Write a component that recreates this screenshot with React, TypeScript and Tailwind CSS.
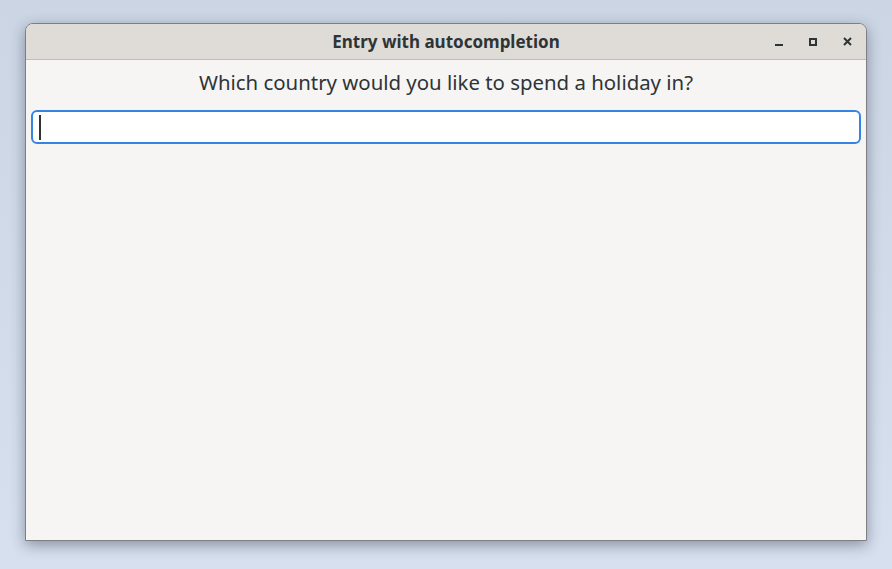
export default function App() {
  return (
    <div className="w-[892px] h-[569px] bg-gradient-to-b from-[#cbd5e3] to-[#d6e0ee] pt-[23px] pl-[25px]" style={{ fontFamily: '"Noto Sans", "Open Sans", sans-serif' }}>
      <div className="w-[842px] h-[518px] flex flex-col bg-[#f6f5f4] rounded-t-[8px] border border-[#7d7f84] shadow-[0_4px_14px_rgba(40,50,70,0.45)] overflow-hidden">
        <header className="h-[36px] shrink-0 flex items-center relative bg-[#dfdbd7] border-b border-[#c1bdb8]">
          <div className="flex-1 text-center text-[17px] font-bold text-[#2e3436]">Entry with autocompletion</div>
          <div className="absolute right-[14px] top-0 h-full flex items-center gap-[26px] text-[#2e3436]">
            <svg width="8" height="8" viewBox="0 0 8 8"><rect x="0" y="6" width="8" height="2" fill="currentColor" /></svg>
            <svg width="8" height="8" viewBox="0 0 8 8"><rect x="1" y="1" width="6" height="6" fill="none" stroke="currentColor" strokeWidth="2" /></svg>
            <svg width="9" height="9" viewBox="0 0 9 9"><path d="M1 1 L8 8 M8 1 L1 8" stroke="currentColor" strokeWidth="2" /></svg>
          </div>
        </header>
        <main className="flex flex-col px-[5px]">
          <p className="text-center text-[20.4px] text-[#2e3436] leading-[28px] mt-[8px]">Which country would you like to spend a holiday in?</p>
          <div className="mt-[14px] h-[34px] rounded-[6px] border-2 border-[#3584e4] bg-white flex items-center pl-[6px]">
            <div className="w-[2px] h-[25px] bg-[#2e3436]" />
          </div>
        </main>
      </div>
    </div>
  );
}
